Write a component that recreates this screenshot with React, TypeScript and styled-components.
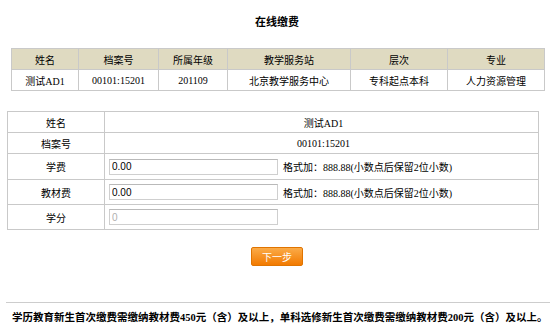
import React from 'react';
import styled, { createGlobalStyle } from 'styled-components';

const GlobalStyle = createGlobalStyle`
  body {
    margin: 0;
    background: #fff;
    color: #000;
    font-family: "Liberation Serif", "Noto Sans CJK SC", serif;
  }
`;

const Page = styled.div`
  width: 554px;
  padding-top: 15px;
`;

const Title = styled.h3`
  margin: 0;
  font-size: 11px;
  line-height: 14px;
  font-weight: bold;
  text-align: center;
`;

const InfoTable = styled.table`
  margin: 19px 0 0 11px;
  width: 534px;
  border-collapse: collapse;
  table-layout: fixed;

  th,
  td {
    border: 1px solid #c9c9c9;
    height: 20px;
    padding: 0;
    font-size: 10px;
    font-weight: normal;
    text-align: center;
  }

  th {
    background: #dfdac1;
  }
`;

const FormTable = styled.table`
  margin: 20px 0 0 7px;
  width: 532px;
  border-collapse: collapse;
  table-layout: fixed;
`;

const FormRow = styled.tr<{ $h: number }>`
  height: ${({ $h }) => $h}px;
`;

const Label = styled.td`
  border: 1px solid #c9c9c9;
  padding: 0;
  font-size: 10px;
  text-align: center;
`;

const Value = styled.td<{ $center?: boolean }>`
  border: 1px solid #c9c9c9;
  padding: 0 0 0 4px;
  font-size: 10px;
  text-align: ${({ $center }) => ($center ? 'center' : 'left')};
`;

const Field = styled.div`
  display: flex;
  align-items: center;
`;

const Input = styled.input`
  box-sizing: border-box;
  width: 169px;
  height: 16px;
  margin: 0;
  padding: 0 2px;
  border: 1px solid #cfcfcf;
  border-top-color: #b9b9b9;
  background: #fff;
  font-family: "Liberation Sans", sans-serif;
  font-size: 10px;
  color: #000;

  &:disabled {
    color: #b0b0b0;
    background: #fff;
  }
`;

const Hint = styled.span`
  margin-left: 5px;
  font-size: 10px;
  white-space: nowrap;
`;

const ButtonRow = styled.div`
  display: flex;
  justify-content: center;
  margin-top: 17px;
`;

const NextButton = styled.button`
  width: 52px;
  height: 19px;
  padding: 0;
  border: 1px solid #e07400;
  border-radius: 2px;
  background: linear-gradient(#fbab48, #f27a00);
  color: #fff;
  font-family: "Noto Sans CJK SC", sans-serif;
  font-size: 10px;
  cursor: pointer;
`;

const Divider = styled.hr`
  margin: 36px 4px 0 6px;
  border: none;
  border-top: 1px solid #cdcdcd;
`;

const Notice = styled.p`
  margin: 8px 0 0 12px;
  font-size: 10.5px;
  line-height: 14px;
  font-weight: bold;
  white-space: nowrap;
`;

const infoCols = [67, 80, 69, 123, 97, 97];
const infoHead = ['姓名', '档案号', '所属年级', '教学服务站', '层次', '专业'];
const infoRow = ['测试AD1', '00101:15201', '201109', '北京教学服务中心', '专科起点本科', '人力资源管理'];

const hint = '格式加：888.88(小数点后保留2位小数)';

export default function App() {
  return (
    <>
      <GlobalStyle />
      <Page>
        <Title>在线缴费</Title>

        <InfoTable>
          <colgroup>
            {infoCols.map((w, i) => (
              <col key={i} style={{ width: w }} />
            ))}
          </colgroup>
          <thead>
            <tr>
              {infoHead.map(h => (
                <th key={h}>{h}</th>
              ))}
            </tr>
          </thead>
          <tbody>
            <tr>
              {infoRow.map(c => (
                <td key={c}>{c}</td>
              ))}
            </tr>
          </tbody>
        </InfoTable>

        <FormTable>
          <colgroup>
            <col style={{ width: 97 }} />
            <col />
          </colgroup>
          <tbody>
            <FormRow $h={21}>
              <Label>姓名</Label>
              <Value $center>测试AD1</Value>
            </FormRow>
            <FormRow $h={21}>
              <Label>档案号</Label>
              <Value $center>00101:15201</Value>
            </FormRow>
            <FormRow $h={26}>
              <Label>学费</Label>
              <Value>
                <Field>
                  <Input defaultValue="0.00" />
                  <Hint>{hint}</Hint>
                </Field>
              </Value>
            </FormRow>
            <FormRow $h={25}>
              <Label>教材费</Label>
              <Value>
                <Field>
                  <Input defaultValue="0.00" />
                  <Hint>{hint}</Hint>
                </Field>
              </Value>
            </FormRow>
            <FormRow $h={25}>
              <Label>学分</Label>
              <Value>
                <Field>
                  <Input defaultValue="0" disabled />
                </Field>
              </Value>
            </FormRow>
          </tbody>
        </FormTable>

        <ButtonRow>
          <NextButton>下一步</NextButton>
        </ButtonRow>

        <Divider />

        <Notice>
          学历教育新生首次缴费需缴纳教材费450元（含）及以上，单科选修新生首次缴费需缴纳教材费200元（含）及以上。
        </Notice>
      </Page>
    </>
  );
}
